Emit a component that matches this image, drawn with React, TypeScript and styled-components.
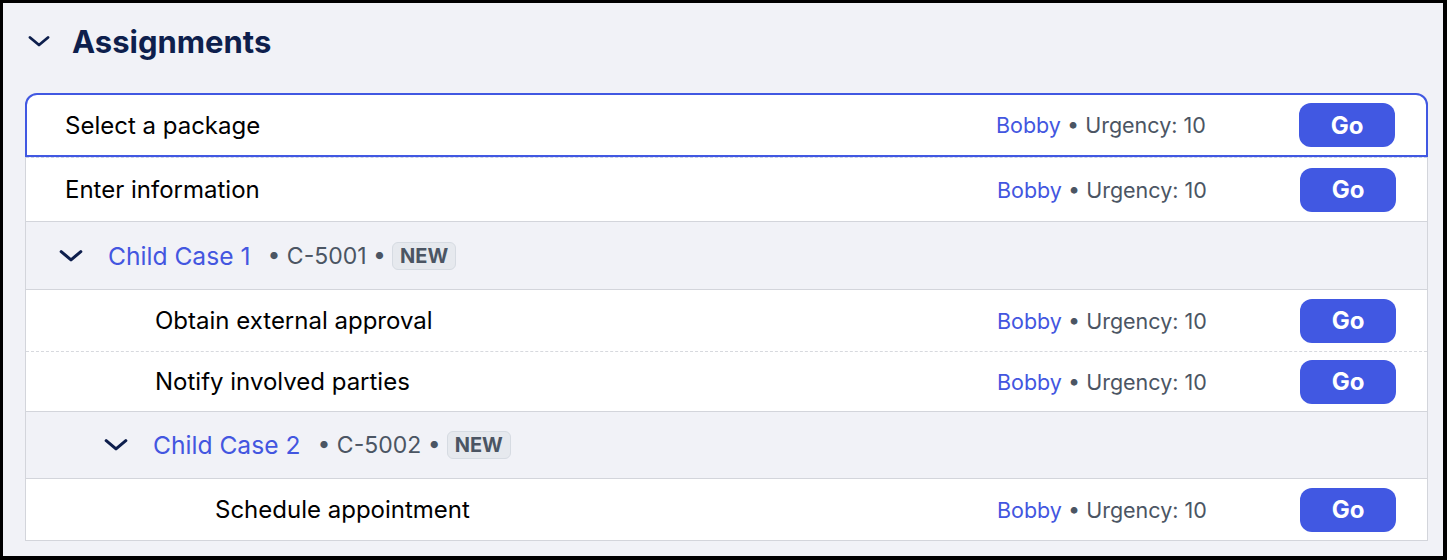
import React from "react";
import styled, { createGlobalStyle } from "styled-components";

interface TaskItem {
  kind: "task"
  label: string
  indent: number
  height: number
  selected?: boolean
  divider: "solid" | "dashed"
}

interface CaseItem {
  kind: "case"
  title: string
  caseId: string
  indent: number
  height: number
}

type ListItem = TaskItem | CaseItem

const FONT = `Inter, Roboto, "Liberation Sans", Arial, sans-serif`

const GlobalStyle = createGlobalStyle`
  html, body {
    margin: 0;
    padding: 0;
  }
  body {
    font-family: ${FONT};
    color: #000;
  }
`

const Frame = styled.div`
  box-sizing: border-box;
  width: 1447px;
  height: 560px;
  border-style: solid;
  border-color: #000;
  border-width: 3px 4px 4px 3px;
  background: #f1f2f7;
  padding: 0 15px 0 22px;
  overflow: hidden;
`

const SectionHeader = styled.div`
  display: flex;
  align-items: center;
  gap: 22px;
  height: 76px;
  padding-left: 3px;
  margin-bottom: 14px;
`

const Title = styled.h2`
  margin: 0;
  font-size: 31px;
  font-weight: 700;
  color: #0e1f4d;
`

const Card = styled.div`
  border-left: 1px solid #d3d5db;
  border-right: 1px solid #d3d5db;
  border-radius: 12px 12px 0 0;
`

const TaskRow = styled.div<{ $indent: number; $height: number; $selected?: boolean; $divider: string }>`
  box-sizing: border-box;
  display: grid;
  grid-template-columns: 1fr 303px 96px;
  align-items: center;
  height: ${p => p.$height}px;
  padding: 0 31px 0 ${p => p.$indent}px;
  margin: ${p => (p.$selected ? "0 -1px" : "0")};
  background: #fff;
  border: ${p => (p.$selected ? "2px solid #4158e2" : "none")};
  border-bottom: ${p =>
    p.$selected
      ? "2px solid #4158e2"
      : `1px ${p.$divider} ${p.$divider === "dashed" ? "#d7d9de" : "#d3d5db"}`};
  border-radius: ${p => (p.$selected ? "12px 12px 0 0" : "0")};
`

const Divider = styled.div`
  height: 0;
  border-top: 1px dashed #c9cfe6;
`

const TaskLabel = styled.span`
  font-size: 24px;
  color: #000;
`

const Meta = styled.span`
  font-size: 21.5px;
  color: #4b5563;
  white-space: nowrap;
`

const Owner = styled.span`
  color: #4356e0;
`

const GoButton = styled.button`
  width: 96px;
  height: 44px;
  border: none;
  border-radius: 12px;
  background: #4158e2;
  color: #fff;
  font-family: ${FONT};
  font-size: 24px;
  font-weight: 700;
  cursor: pointer;
`

const CaseRow = styled.div<{ $indent: number; $height: number }>`
  box-sizing: border-box;
  display: flex;
  align-items: center;
  height: ${p => p.$height}px;
  padding-left: ${p => p.$indent}px;
  border-bottom: 1px solid #d3d5db;
  background: #f1f2f7;
`

const CaseTitle = styled.span`
  margin-left: 25px;
  font-size: 24.6px;
  color: #4356e0;
`

const CaseMeta = styled.span`
  margin-left: 17px;
  font-size: 23px;
  color: #4b5563;
`

const Badge = styled.span`
  margin-left: 6px;
  display: inline-flex;
  align-items: center;
  height: 26px;
  padding: 0 7px;
  border: 1px solid #d6dbe2;
  border-radius: 6px;
  background: #e6e9ee;
  color: #4b5563;
  font-size: 20px;
  font-weight: 700;
`

const Chevron = ({ size = 22 }: { size?: number }) => (
  <svg width={size} height={size * 0.5} viewBox="0 0 22 11" fill="none">
    <path d="M2 1.5 L11 9 L20 1.5" stroke="#0e1f4d" strokeWidth="2.8" strokeLinecap="round" strokeLinejoin="round" />
  </svg>
)

const items: ListItem[] = [
  { kind: "task", label: "Select a package", indent: 38, height: 64, selected: true, divider: "dashed" },
  { kind: "task", label: "Enter information", indent: 39, height: 64, divider: "solid" },
  { kind: "case", title: "Child Case 1", caseId: "C-5001", indent: 33, height: 68 },
  { kind: "task", label: "Obtain external approval", indent: 129, height: 62, divider: "dashed" },
  { kind: "task", label: "Notify involved parties", indent: 129, height: 60, divider: "solid" },
  { kind: "case", title: "Child Case 2", caseId: "C-5002", indent: 78, height: 67 },
  { kind: "task", label: "Schedule appointment", indent: 189, height: 62, divider: "solid" },
]

const App = () => {
  return (
    <>
      <GlobalStyle />
      <Frame>
        <SectionHeader>
          <Chevron />
          <Title>Assignments</Title>
        </SectionHeader>

        <Card>
          {items.map((item, i) =>
            item.kind === "task" ? (
              <React.Fragment key={i}>
                <TaskRow
                  $indent={item.indent}
                  $height={item.height}
                  $selected={item.selected}
                  $divider={item.divider}
                >
                  <TaskLabel>{item.label}</TaskLabel>
                  <Meta>
                    <Owner>Bobby</Owner> • Urgency: 10
                  </Meta>
                  <GoButton>Go</GoButton>
                </TaskRow>
                {item.selected && <Divider />}
              </React.Fragment>
            ) : (
              <CaseRow key={i} $indent={item.indent} $height={item.height}>
                <Chevron size={24} />
                <CaseTitle>{item.title}</CaseTitle>
                <CaseMeta>• {item.caseId} •</CaseMeta>
                <Badge>NEW</Badge>
              </CaseRow>
            )
          )}
        </Card>
      </Frame>
    </>
  )
}

export default App
